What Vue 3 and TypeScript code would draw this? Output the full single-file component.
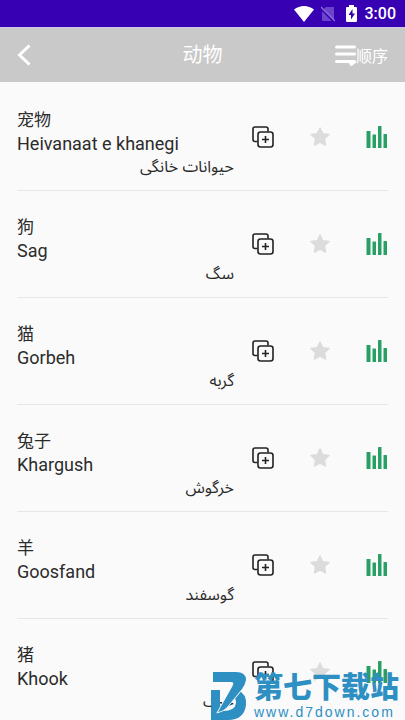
<script setup lang="ts">
import { ref } from 'vue'

interface Word {
  zh: string
  latin: string
  fa: string
}

const words: Word[] = [
  { zh: '宠物', latin: 'Heivanaat e khanegi', fa: 'حیوانات خانگی' },
  { zh: '狗', latin: 'Sag', fa: 'سگ' },
  { zh: '猫', latin: 'Gorbeh', fa: 'گربه' },
  { zh: '兔子', latin: 'Khargush', fa: 'خرگوش' },
  { zh: '羊', latin: 'Goosfand', fa: 'گوسفند' },
  { zh: '猪', latin: 'Khook', fa: 'خوک' },
]

const starred = ref<Set<string>>(new Set())

function toggleStar(word: Word): void {
  const next = new Set(starred.value)
  if (!next.delete(word.zh)) next.add(word.zh)
  starred.value = next
}
</script>

<template>
  <div class="screen">
    <div class="status">
      <svg class="wifi" viewBox="0 0 20 16" aria-hidden="true">
        <path d="M0 3.6C5.8-1.2 14.2-1.2 20 3.6L10 16z" fill="#fff" />
      </svg>
      <svg class="sim" viewBox="0 0 14 16" aria-hidden="true">
        <path d="M5 1h8v14H1V5z" fill="#6a45cc" />
        <path d="M0 2.500l13 13.500" stroke="#3700b3" stroke-width="2" />
        <path d="M0 1l14 14" stroke="#8d6cd8" stroke-width="1.500" />
      </svg>
      <svg class="battery" viewBox="0 0 11 17" aria-hidden="true">
        <path d="M3 0h5v2h2q1 0 1 1v13q0 1-1 1H1q-1 0-1-1V3q0-1 1-1h2z" fill="#fff" />
        <path d="M6.500 4L2.500 10h2.500v4.500l4-6H6.500z" fill="#3700b3" />
      </svg>
      <span class="clock">3:00</span>
    </div>

    <header class="bar">
      <button class="back" type="button" aria-label="返回">
        <svg viewBox="0 0 14 22" aria-hidden="true">
          <path d="M12.500 1.500L2.500 11l10 9.500" fill="none" stroke="#fff" stroke-width="3" />
        </svg>
      </button>
      <h1 class="title">动物</h1>
      <button class="order" type="button">
        <svg viewBox="0 0 21 21" aria-hidden="true">
          <path d="M1.500 2h18M1.500 9h18M1.500 16.500h18" stroke="#fff" stroke-width="3" stroke-linecap="round" />
          <path d="M13 17h7.500v1L16 21.500z" fill="#fff" />
        </svg>
        <span>顺序</span>
      </button>
    </header>

    <ul class="list">
      <li v-for="word in words" :key="word.zh" class="row">
        <div class="text">
          <span class="zh">{{ word.zh }}</span>
          <span class="latin">{{ word.latin }}</span>
          <span class="fa" lang="fa" dir="rtl">{{ word.fa }}</span>
        </div>
        <div class="actions">
          <button type="button" aria-label="复制">
            <svg viewBox="0 0 22 22" aria-hidden="true" fill="none" stroke="#222" stroke-width="1.600">
              <path d="M5.500 15.500H3q-2 0-2-2V3q0-2 2-2h11q2 0 2 2v2.500" />
              <rect x="6" y="6" width="15" height="15" rx="2.500" />
              <path d="M13.500 10v7M10 13.500h7" />
            </svg>
          </button>
          <button type="button" aria-label="收藏" :aria-pressed="starred.has(word.zh)" @click="toggleStar(word)">
            <svg class="star" :class="{ on: starred.has(word.zh) }" viewBox="0 0 22 22" aria-hidden="true">
              <path d="M11 2l2.700 5.700 6.300.8-4.600 4.300 1.200 6.200L11 16l-5.600 3 1.200-6.200L2 8.500l6.300-.8z" stroke-width="1.500" stroke-linejoin="round" />
            </svg>
          </button>
          <button type="button" aria-label="播放">
            <svg viewBox="0 0 22 22" aria-hidden="true" fill="#28a065">
              <rect x="0.500" y="5" width="4" height="17" rx="0.500" />
              <rect x="6.500" y="8.500" width="3.500" height="13.500" rx="0.500" />
              <rect x="12" y="0" width="3.500" height="22" rx="0.500" />
              <rect x="17.500" y="8" width="3.500" height="14" rx="0.500" />
            </svg>
          </button>
        </div>
      </li>
    </ul>

    <div class="mark">
      <svg viewBox="0 0 36 48" aria-hidden="true" fill="#2e8fc3">
        <path fill-rule="evenodd" d="M0 18H9V40L0 34z" />
        <path d="M27 18Q36 22 35 33Q33 48 17 48H0V35H9V39Q24 40 25 31Q25 27 23 25z" />
        <path d="M2 0H25Q35 0 35 8Q34 13 31 17L17 34Q13 39 7 40L21 15Q24 10 20 10H2z" stroke="#fafafa" stroke-width="1.800" paint-order="stroke" />
      </svg>
      <div class="mark-text">
        <span class="mark-name">第七下载站</span>
        <span class="mark-url">www.d7down.com</span>
      </div>
    </div>
  </div>
</template>

<style>
body {
  background: #fafafa;
}
</style>

<style scoped>
.screen {
  display: flex;
  flex-direction: column;
  position: relative;
  height: 100vh;
  overflow: hidden;
  background: #fafafa;
  color: #2b2b2b;
  font-family: Roboto, 'Noto Sans CJK SC', sans-serif;
}

button {
  display: flex;
  align-items: center;
  padding: 0;
  border: 0;
  background: none;
  color: inherit;
  font: inherit;
  cursor: pointer;
}

svg {
  display: block;
  flex: none;
}

.status {
  display: flex;
  flex: none;
  align-items: center;
  justify-content: flex-end;
  height: 27px;
  padding-right: 9px;
  background: #3700b3;
  color: #fff;
}

.wifi {
  width: 20px;
  height: 16px;
  margin-right: 7px;
}

.sim {
  width: 14px;
  height: 16px;
  margin-right: 11px;
}

.battery {
  width: 11px;
  height: 17px;
  margin-right: 8px;
}

.clock {
  font-size: 16px;
  font-weight: 500;
  line-height: 27px;
}

.bar {
  display: grid;
  flex: none;
  grid-template-columns: 1fr auto 1fr;
  align-items: center;
  box-sizing: border-box;
  height: 55px;
  padding: 0 17px;
  border-top: 1px solid #d0c6e8;
  background: #c9c9c9;
  color: #fff;
}

.back svg {
  width: 14px;
  height: 22px;
}

.title {
  margin: 0;
  font-size: 20px;
  font-weight: 400;
  line-height: 28px;
}

.order {
  justify-self: end;
  font-size: 16px;
}

.order svg {
  width: 21px;
  height: 21px;
}

.list {
  flex: 1;
  min-height: 0;
  margin: 0;
  padding: 2px 17px 0;
  overflow: hidden;
  list-style: none;
}

.row {
  display: flex;
  align-items: center;
  border-bottom: 1px solid #e6e6e6;
}

.text {
  display: flex;
  flex: 1;
  flex-direction: column;
  padding: 24px 0 12px;
}

.zh {
  font-size: 17px;
  line-height: 24px;
}

.latin {
  font-size: 18px;
  line-height: 24px;
}

.fa {
  font-family: 'Noto Sans Arabic', 'DejaVu Sans', sans-serif;
  font-size: 16px;
  line-height: 22px;
}

.actions {
  display: flex;
  gap: 35px;
  margin-left: 18px;
}

.actions svg {
  width: 22px;
  height: 22px;
}

.star {
  fill: #dcdcdc;
  stroke: #dcdcdc;
}

.star.on {
  fill: #f5b400;
  stroke: #f5b400;
}

.mark {
  display: flex;
  position: absolute;
  right: 6px;
  bottom: 0;
  align-items: flex-end;
  gap: 7px;
  color: #2e8fc3;
  pointer-events: none;
}

.mark svg {
  width: 36px;
  height: 48px;
}

.mark-text {
  display: flex;
  flex-direction: column;
}

.mark-name {
  font-size: 29px;
  font-weight: 900;
  line-height: 32px;
}

.mark-url {
  font-family: 'Liberation Sans', sans-serif;
  font-size: 14px;
  line-height: 16px;
  letter-spacing: 2px;
}
</style>
